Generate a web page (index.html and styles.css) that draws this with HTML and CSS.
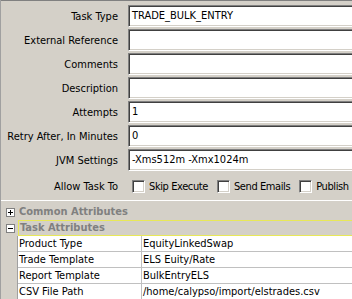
FILE: index.html
```html
<!DOCTYPE html>
<html>
<head>
<meta charset="utf-8">
<link rel="stylesheet" href="styles.css">
</head>
<body>
<div class="form">
  <div class="row"><span class="lbl">Task Type</span><div class="field">TRADE_BULK_ENTRY</div></div>
  <div class="row"><span class="lbl">External Reference</span><div class="field"></div></div>
  <div class="row"><span class="lbl">Comments</span><div class="field"></div></div>
  <div class="row"><span class="lbl">Description</span><div class="field"></div></div>
  <div class="row"><span class="lbl">Attempts</span><div class="field">1</div></div>
  <div class="row"><span class="lbl">Retry After, In Minutes</span><div class="field">0</div></div>
  <div class="row"><span class="lbl">JVM Settings</span><div class="field">-Xms512m -Xmx1024m</div></div>
  <div class="row checks">
    <span class="lbl">Allow Task To</span>
    <div class="opts">
      <span class="opt"><span class="cb"></span>Skip Execute</span>
      <span class="opt"><span class="cb"></span>Send Emails</span>
      <span class="opt"><span class="cb"></span>Publish</span>
    </div>
  </div>
</div>
<div class="tree">
  <div class="node">
    <svg class="toggle" width="9" height="9" viewBox="0 0 9 9"><rect x="0.5" y="0.5" width="8" height="8" fill="#fff" stroke="#808080"/><path d="M2 4.5h5M4.5 2v5" stroke="#000"/></svg>
    <span class="ntext">Common Attributes</span>
  </div>
  <div class="node">
    <svg class="toggle" width="9" height="9" viewBox="0 0 9 9"><rect x="0.5" y="0.5" width="8" height="8" fill="#fff" stroke="#808080"/><path d="M2 4.5h5" stroke="#000"/></svg>
    <span class="ntext focus">Task Attributes</span>
  </div>
  <div class="table">
    <div class="cell">Product Type</div><div class="cell">EquityLinkedSwap</div>
    <div class="cell">Trade Template</div><div class="cell">ELS Euity/Rate</div>
    <div class="cell">Report Template</div><div class="cell">BulkEntryELS</div>
    <div class="cell">CSV File Path</div><div class="cell">/home/calypso/import/elstrades.csv</div>
  </div>
</div>
</body>
</html>
```
FILE: styles.css
```css
html, body {
  margin: 0;
  padding: 0;
  background: #d4d0c8;
  overflow: hidden;
}
body {
  width: 352px;
  height: 299px;
  font-family: "DejaVu Sans Condensed", "DejaVu Sans", sans-serif;
  font-stretch: condensed;
  font-size: 11px;
  color: #000;
  border-left: 1px solid #a0a0a0;
  box-sizing: border-box;
}
.form {
  border-top: 1px solid #808080;
  padding-top: 4px;
  height: 201px;
  border-bottom: 1px solid #ffffff;
  box-sizing: border-box;
  display: flex;
  flex-direction: column;
  gap: 2px;
}
.row {
  display: grid;
  grid-template-columns: 117px 240px;
  column-gap: 10px;
  align-items: center;
  height: 22px;
}
.lbl {
  text-align: right;
  white-space: nowrap;
}
.field {
  height: 22px;
  box-sizing: border-box;
  background: #fff;
  border: 1px solid;
  border-color: #808080 #ffffff #ffffff #808080;
  box-shadow: inset 1px 1px 0 #404040, inset -1px -1px 0 #d4d0c8;
  padding: 0 3px;
  line-height: 20px;
  white-space: nowrap;
}
.row.checks {
  height: 26px;
}
.opts {
  display: flex;
  align-items: center;
  gap: 9px;
  padding-left: 4px;
  white-space: nowrap;
  letter-spacing: -0.4px;
}
.opt {
  display: flex;
  align-items: center;
  gap: 4px;
}
.cb {
  width: 13px;
  height: 13px;
  box-sizing: border-box;
  background: #fff;
  border: 1px solid;
  border-color: #808080 #ffffff #ffffff #808080;
  box-shadow: inset 1px 1px 0 #404040, inset -1px -1px 0 #d4d0c8;
}
.tree {
  padding-top: 3px;
}
.node {
  display: flex;
  align-items: center;
  height: 16px;
  padding-left: 5px;
  gap: 3px;
}
.ntext {
  font-weight: bold;
  color: #808080;
  height: 16px;
  line-height: 16px;
  flex: 1;
  padding-left: 1px;
  box-sizing: border-box;
}
.ntext.focus {
  border: 1px solid #e8e858;
  border-right: none;
  line-height: 14px;
}
.table {
  margin-left: 16px;
  display: grid;
  grid-template-columns: 124px 1fr;
  background: #fff;
  border-left: 1px solid #a0a0a0;
}
.cell {
  height: 16px;
  line-height: 15px;
  box-sizing: border-box;
  border-bottom: 1px solid #c0c0c0;
  padding-left: 1px;
  white-space: nowrap;
}
.cell:nth-child(odd) {
  border-right: 1px solid #c0c0c0;
}
```
